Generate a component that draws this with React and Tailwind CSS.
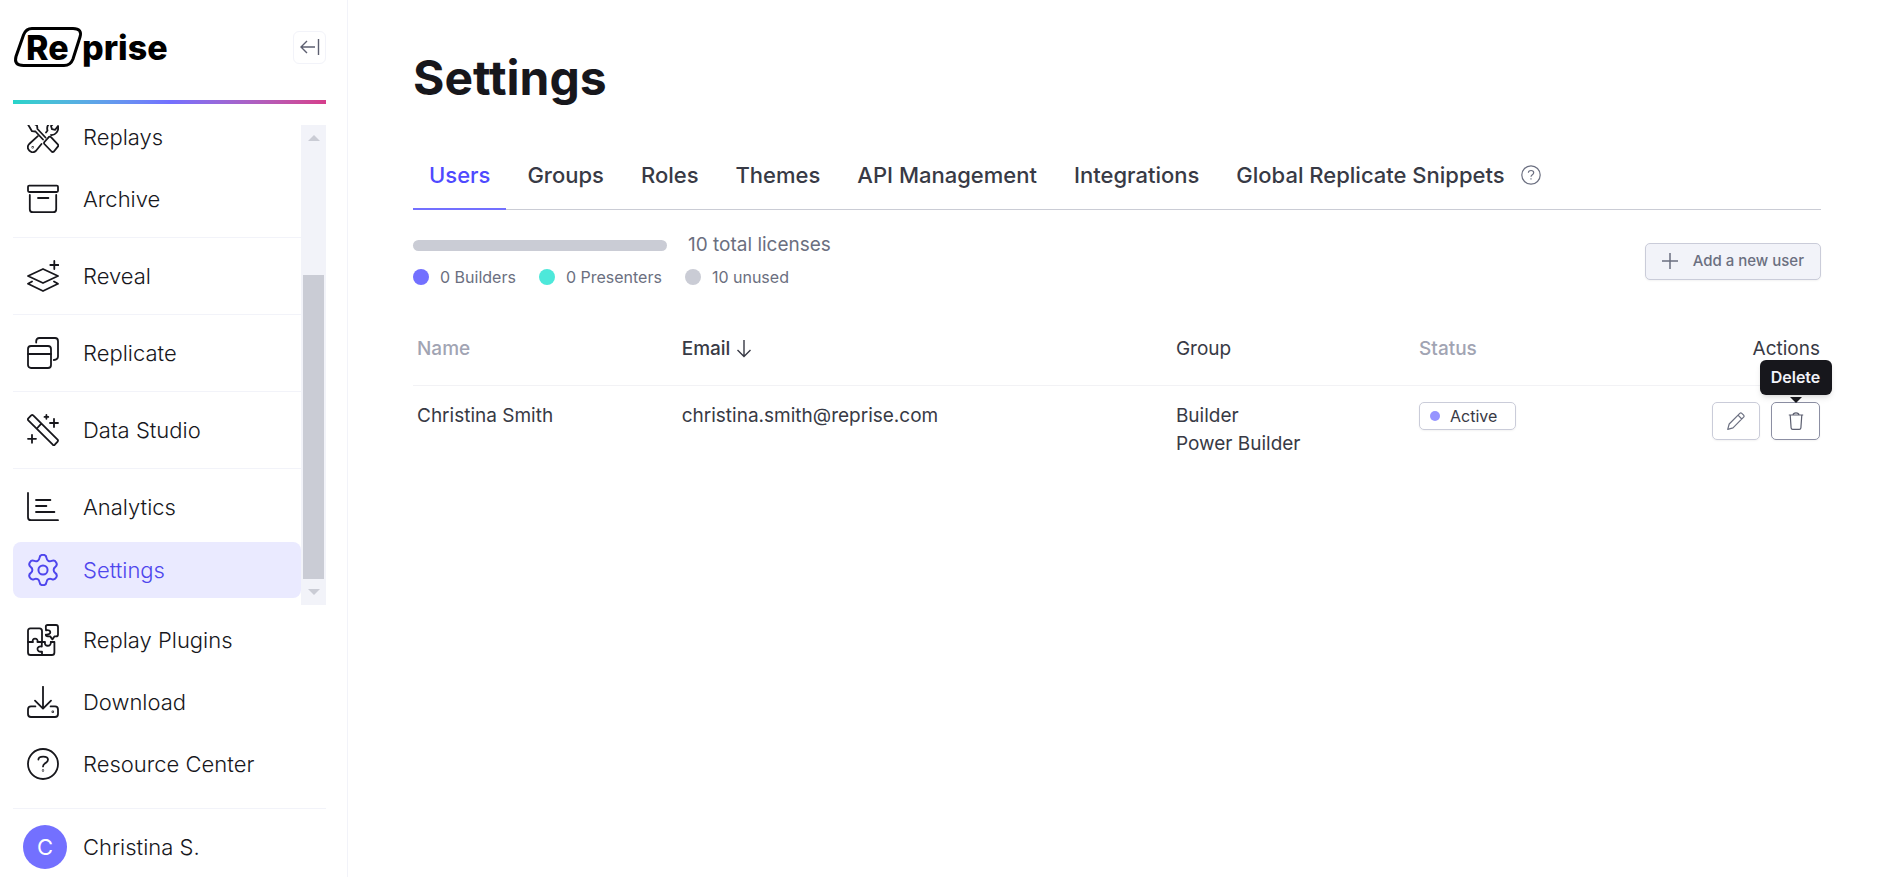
import React, { useState } from 'react';
import { Settings } from 'lucide-react';

const NavIcon = ({ children }) => (
  <svg
    className="size-8 shrink-0"
    viewBox="0 0 32 32"
    fill="none"
    stroke="currentColor"
    strokeWidth="1.8"
    strokeLinecap="round"
    strokeLinejoin="round"
    aria-hidden="true"
  >
    {children}
  </svg>
);

const ReplaysIcon = () => (
  <NavIcon>
    <path d="M1 3.5 3.8 1 10 4.5 10.5 8 18.5 16.5M1 3.5 5 10.2 8.5 10.5 16 18.5" />
    <path d="M22 15.8q1-.6 2 .3l6.8 7.2q1 1.2 0 2.3l-3.9 4.9q-1.2 1-2.3 0L17.4 23q-.8-1 0-2z" />
    <path d="M10.8 15.2 2.2 23c-4 4.5 2.2 11 6.6 7L14.5 23" />
    <path d="M19 11.5 20.5 9.5C19 4 23 1 28 1.2L24 5l1 3.2 3.2.6L31 5c1.2 5-2.6 9.4-7 9" />
    <circle cx="5.7" cy="26.3" r=".3" />
  </NavIcon>
);

const ArchiveIcon = () => (
  <NavIcon>
    <rect x="1" y="2.6" width="30" height="6.4" rx="1.2" />
    <path d="M2.8 12v14.2q0 3 3 3h20.4q3 0 3-3V12M11 15h10.4" />
  </NavIcon>
);

const RevealIcon = () => (
  <NavIcon>
    <path d="M1 16 16 9l15 7-15 7z" />
    <path d="M5 21.4 1 23.8 16 31l15-7.2-4-2.4M27.3 1v8M23.3 5h8" />
  </NavIcon>
);

const ReplicateIcon = () => (
  <NavIcon>
    <rect x="1" y="9" width="23" height="22" rx="3" />
    <path d="M1 17h23M9.2 5.6V4.2Q9.200 1 12.400 1H28q3 0 3 3.200v15.400q0 3.200-4.200 3.400" />
  </NavIcon>
);

const DataStudioIcon = () => (
  <NavIcon>
    <path d="M1.3 6.400q-.8-1.200 0-2l2.900-3q1-.8 2 0L30.600 25.600q.8 1 0 2l-2.800 3.100q-1 .8-2 0zM10.300 14l4-4.300" />
    <path d="M19.400 1v3.800M17.500 2.900h3.800M27 4.800V13M23 9h8M5 20.800v8M1 24.800h8" />
  </NavIcon>
);

const AnalyticsIcon = () => (
  <NavIcon>
    <path d="M1 2v24.200q0 3 3 3h27M9 9h14.400M9 15h10.400M9 21h18.400" />
  </NavIcon>
);

const SettingsIcon = () => (
  <Settings className="size-8 shrink-0" viewBox="1.5 1.5 21 21" strokeWidth={1.3} aria-hidden="true" />
);

const PluginsIcon = () => (
  <NavIcon>
    <path d="M15 18V7q0-2.600-2.600-2.600h-9Q1 4.400 1 7v21.400Q1 31 3.600 31h21.200q2.600 0 2.600-2.600V18h-3.600" />
    <path d="M1 18h5c-2-4.500 6-4.500 4.400 0H18c-1.200 5 6.600 5 5.800 0" />
    <path d="M15 31v-3.400c-6 1.200-6-6.200-.2-5V18" />
    <path d="M18.800 2.800Q18.800 1 20.600 1H29q2 0 2 2v7.400q0 2-2 2h-1.600l-2 3-2.200-3h-2.400q-2 0-2-1.800c6 .8 6-5.600.2-4.200z" />
  </NavIcon>
);

const DownloadIcon = () => (
  <NavIcon>
    <path d="M16 .8v21.600M8 14.600l8 8 8-8" />
    <path d="M8.400 20.400H4q-3 0-3 3.200V28q0 3 3 3h24q3 0 3-3v-4.400q0-3.200-3-3.200h-4.400" />
    <circle cx="25.800" cy="25.800" r=".4" />
  </NavIcon>
);

const ResourceIcon = () => (
  <NavIcon>
    <circle cx="16" cy="16" r="15" />
    <path d="M11.400 11.600c0-4 9.600-4.200 9.600.2 0 3.400-5 3-5 6.600" />
    <circle cx="16" cy="22.400" r=".3" />
  </NavIcon>
);

const scrollGroups = [
  [
    { label: 'Replays', icon: ReplaysIcon },
    { label: 'Archive', icon: ArchiveIcon }
  ],
  [{ label: 'Reveal', icon: RevealIcon }],
  [{ label: 'Replicate', icon: ReplicateIcon }],
  [{ label: 'Data Studio', icon: DataStudioIcon }],
  [
    { label: 'Analytics', icon: AnalyticsIcon },
    { label: 'Settings', icon: SettingsIcon, active: true }
  ]
];

const footerItems = [
  { label: 'Replay Plugins', icon: PluginsIcon },
  { label: 'Download', icon: DownloadIcon },
  { label: 'Resource Center', icon: ResourceIcon }
];

const tabs = ['Users', 'Groups', 'Roles', 'Themes', 'API Management', 'Integrations', 'Global Replicate Snippets'];

const legend = [
  { label: '0 Builders', color: 'bg-[#7370ff]' },
  { label: '0 Presenters', color: 'bg-[#4de8da]' },
  { label: '10 unused', color: 'bg-[#caccd5]' }
];

const NavItem = ({ item }) => (
  <a
    href="#"
    className={`flex h-14 shrink-0 items-center gap-6 rounded-lg pl-3.5 text-[22px] leading-6 font-light ${
      item.active ? 'mt-px bg-[#eaeaff] text-[#4f46ed]' : 'text-[#17171c]'
    }`}
  >
    <item.icon />
    {item.label}
  </a>
);

const Logo = () => (
  <svg className="h-10 w-[156px]" viewBox="0 0 156 40" role="img" aria-label="Reprise">
    <path
      d="M19 1.500H60q9.500 0 7 8.500L60 32q-2.500 6.500-9 6.500H10.500q-10 0-7.500-9L10.500 8Q13 1.500 19 1.500z"
      fill="none"
      stroke="#000"
      strokeWidth="3"
    />
    <text x="13" y="33" fontFamily="Inter, sans-serif" fontWeight="800" fontSize="34">Re</text>
    <text x="69" y="33" fontFamily="Inter, sans-serif" fontWeight="800" fontSize="34">prise</text>
  </svg>
);

const Sidebar = () => (
  <aside className="flex h-screen w-[348px] shrink-0 flex-col border-r border-[#f2f3f9] pt-[27px] pr-[21px] pb-2 pl-[13px]">
    <div className="flex items-center justify-between">
      <Logo />
      <button
        type="button"
        aria-label="Collapse sidebar"
        className="flex size-[33px] items-center justify-center rounded-md border border-[#f2f3f9] text-[#5c5f70]"
      >
        <svg width="20" height="18" viewBox="0 0 20 18" fill="none" stroke="currentColor" strokeWidth="1.4">
          <path d="M15 9H1M7 3 1 9l6 6M18.500 1v16" />
        </svg>
      </button>
    </div>
    <div className="mt-[33px] h-1 shrink-0 bg-linear-to-r from-[#26d4c9] via-[#7370ff] to-[#d63d8b]" />

    <div className="mt-[21px] flex min-h-0 flex-1">
      <nav className="flex min-w-0 flex-1 flex-col justify-end overflow-hidden pb-[7px]">
        {scrollGroups.map((group, index) => (
          <div
            key={index}
            className={`flex shrink-0 flex-col gap-1.5 ${index > 0 ? 'mt-2.5 border-t border-[#f2f3f9] pt-2.5' : ''}`}
          >
            {group.map((item) => (
              <NavItem key={item.label} item={item} />
            ))}
          </div>
        ))}
      </nav>
      {/* scroll track */}
      <div className="flex w-[25px] flex-col items-center bg-[#f2f3f9] py-2.5" aria-hidden="true">
        <svg width="12" height="6" viewBox="0 0 12 6" fill="#caccd5"><path d="M0 6 6 0l6 6z" /></svg>
        <div className="flex-1" />
        <div className="mb-2.5 h-[304px] w-[21px] bg-[#caccd5]" />
        <svg width="12" height="6" viewBox="0 0 12 6" fill="#caccd5"><path d="M0 0l6 6 6-6z" /></svg>
      </div>
    </div>

    <div className="mt-[7px] flex flex-col gap-1.5">
      {footerItems.map((item) => (
        <NavItem key={item.label} item={item} />
      ))}
    </div>
    <div className="mt-4 flex items-center gap-4 border-t border-[#f2f3f9] pt-4 pl-2.5 text-[22px] font-light text-[#17171c]">
      <span className="flex size-11 items-center justify-center rounded-full bg-[#7370ff] font-normal text-white">C</span>
      Christina S.
    </div>
  </aside>
);

const UsersTable = () => (
  <table className="mt-5 w-full table-fixed text-left text-[19px] leading-7 text-[#383a45]">
    <thead>
      <tr className="h-[72px] border-b border-[#f2f2f5]">
        <th className="w-[18.8%] pl-1 font-medium text-[#a1a4b3]">Name</th>
        <th className="w-[35.1%] pl-1 font-medium">
          <span className="flex items-center gap-1.5">
            Email
            <svg width="16" height="18" viewBox="0 0 16 18" fill="none" stroke="currentColor" strokeWidth="1.4">
              <path d="M8 0v16.500M1.500 10 8 16.500l6.500-6.500" />
            </svg>
          </span>
        </th>
        <th className="w-[17.2%] pl-1 font-normal">Group</th>
        <th className="pl-[5px] font-medium text-[#a1a4b3]">Status</th>
        <th className="pr-px text-right font-normal">Actions</th>
      </tr>
    </thead>
    <tbody>
      <tr className="align-top font-normal">
        <td className="pt-4 pl-1">Christina Smith</td>
        <td className="pt-4 pl-1">christina.smith@reprise.com</td>
        <td className="pt-4 pl-1">
          Builder
          <br />
          Power Builder
        </td>
        <td className="pt-4 pl-[5px]">
          <span className="flex h-7 w-[97px] items-center gap-2.5 rounded-[5px] border border-[#caccd9] pl-2.5 text-base shadow-xs">
            <span className="size-2.5 rounded-full bg-[#9694ff]" />
            Active
          </span>
        </td>
        <td className="pt-4 pr-px">
          <div className="flex justify-end gap-[11px]">
            <button
              type="button"
              aria-label="Edit"
              className="flex h-[38px] w-12 items-center justify-center rounded-[5px] border border-[#caccd9] text-[#6b6f80] shadow-xs"
            >
              <svg width="18" height="18" viewBox="0 0 18 18" fill="none" stroke="currentColor" strokeWidth="1.2" strokeLinejoin="round">
                <path d="M.7 17.300 2.200 12 12.800 1.400q1-.9 2 0l1.800 1.800q.9 1 0 2L6 15.800zM11 3.200l3.800 3.800" />
              </svg>
            </button>
            <div className="relative">
              <button
                type="button"
                aria-label="Delete"
                className="flex h-[38px] w-[49px] items-center justify-center rounded-[5px] border border-[#8c8fa3] text-[#5c5f70] shadow-xs"
              >
                <svg width="16" height="18" viewBox="0 0 16 18" fill="none" stroke="currentColor" strokeWidth="1.2" strokeLinejoin="round">
                  <path d="M.8 3h14.400M2.200 3l.9 12.800q.2 1.500 1.600 1.500h6.600q1.400 0 1.600-1.500L13.800 3M5 3Q5.200.9 8 .9T11 3" />
                </svg>
              </button>
              <div
                role="tooltip"
                className="absolute bottom-full left-1/2 mb-[7px] flex h-[35px] w-[72px] -translate-x-1/2 items-center justify-center rounded-md bg-[#17171c] text-base font-semibold text-[#f2f3f9] shadow-md"
              >
                Delete
                <svg className="absolute top-full mt-0.5" width="12" height="6" viewBox="0 0 12 6" fill="#17171c">
                  <path d="M0 0l6 6 6-6z" />
                </svg>
              </div>
            </div>
          </div>
        </td>
      </tr>
    </tbody>
  </table>
);

const App = () => {
  const [activeTab, setActiveTab] = useState('Users');

  return (
    <div className="flex min-h-screen bg-white font-['Inter',sans-serif]">
      <Sidebar />
      <main className="min-w-0 flex-1 pt-[46px] pr-[60px] pl-[65px]">
        <h1 className="text-5xl leading-[64px] font-bold text-[#17171c]">Settings</h1>

        <div className="mt-8 flex gap-[5px] border-b border-[#caccd5]" role="tablist">
          {tabs.map((tab) => (
            <button
              key={tab}
              type="button"
              role="tab"
              aria-selected={tab === activeTab}
              onClick={() => setActiveTab(tab)}
              className={`-mb-px flex h-[68px] items-center gap-4 border-b-2 px-4 text-[22px] font-medium whitespace-nowrap ${
                tab === activeTab ? 'border-[#7370ff] text-[#4f4aff]' : 'border-transparent text-[#383a45]'
              }`}
            >
              {tab}
              {tab === 'Global Replicate Snippets' && (
                <svg width="20" height="20" viewBox="0 0 20 20" fill="none" stroke="#6b6f80" strokeWidth="1.2">
                  <circle cx="10" cy="10" r="9.200" />
                  <path d="M7.400 7.700c0-3 5.300-2.900 5.300 0 0 2-2.700 2-2.700 4M10 13.300v1.300" />
                </svg>
              )}
            </button>
          ))}
        </div>

        <section className="mt-[19px] flex items-center justify-between">
          <div className="text-[#6b6f80]">
            <div className="flex items-center gap-[21px] text-[19px] leading-8">
              <div className="h-[11px] w-[254px] rounded-full bg-[#caccd5]" />
              10 total licenses
            </div>
            <ul className="flex gap-[23px] text-base leading-8">
              {legend.map((entry) => (
                <li key={entry.label} className="flex items-center gap-[11px]">
                  <span className={`size-4 rounded-full ${entry.color}`} />
                  {entry.label}
                </li>
              ))}
            </ul>
          </div>
          <button
            type="button"
            className="flex h-[37px] items-center gap-[15px] rounded-[5px] border border-[#caccd9] bg-[#f2f3f9] px-4 text-[15px] font-medium text-[#6b6f80] shadow-xs"
          >
            <svg width="16" height="16" viewBox="0 0 16 16" fill="none" stroke="currentColor" strokeWidth="1.500">
              <path d="M8 0v16M0 8h16" />
            </svg>
            Add a new user
          </button>
        </section>

        <UsersTable />
      </main>
    </div>
  );
};

export default App;
